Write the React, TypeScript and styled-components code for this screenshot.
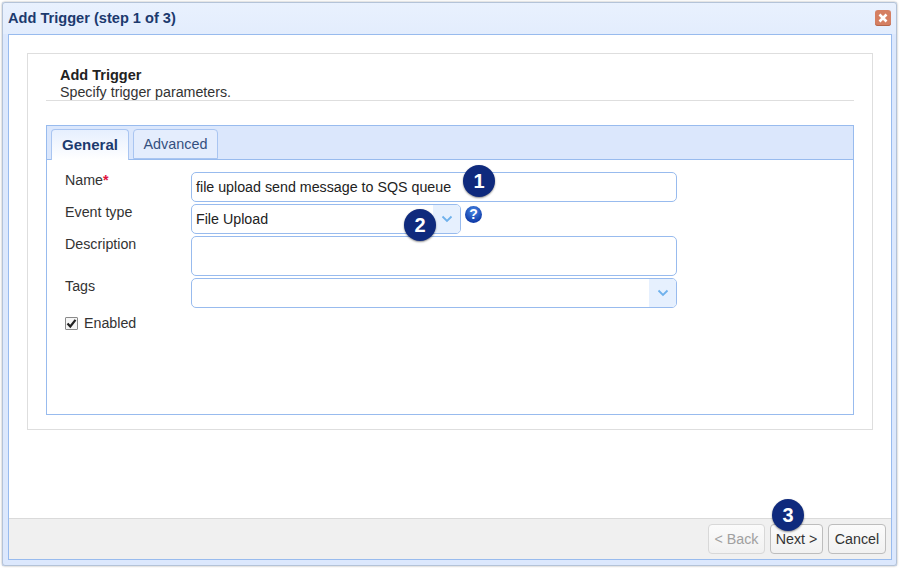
import styled, { createGlobalStyle } from 'styled-components';

const Chevron = () => (
  <svg width="12" height="8" viewBox="0 0 12 8" fill="none">
    <path d="M1.5 1.5 L6 6 L10.5 1.5" stroke="#6fb1ec" strokeWidth="1.8" />
  </svg>
);

const App = () => {
  return (
    <>
      <GlobalStyle />
      <Window>
        <TitleBar>
          <Title>Add Trigger (step 1 of 3)</Title>
          <CloseButton>
            <svg width="12" height="12" viewBox="0 0 12 12" fill="none">
              <path d="M2.5 2.5 L9.5 9.5 M9.5 2.5 L2.5 9.5" stroke="#fff" strokeWidth="2.6" />
            </svg>
          </CloseButton>
        </TitleBar>
        <Panel>
          <Content>
            <Card>
              <Header>
                <Heading>Add Trigger</Heading>
                <Subheading>Specify trigger parameters.</Subheading>
              </Header>
              <TabPanel>
                <TabStrip>
                  <Tab $active>General</Tab>
                  <Tab>Advanced</Tab>
                </TabStrip>
                <Form>
                  <Row>
                    <Label>
                      Name<Required>*</Required>
                    </Label>
                    <Control>file upload send message to SQS queue</Control>
                  </Row>
                  <Row>
                    <Label>Event type</Label>
                    <Control $width={270}>
                      File Upload
                      <Trigger>
                        <Chevron />
                      </Trigger>
                    </Control>
                    <Help>?</Help>
                  </Row>
                  <Row>
                    <Label>Description</Label>
                    <Control $height={40} />
                  </Row>
                  <Row>
                    <Label>Tags</Label>
                    <Control>
                      <Trigger>
                        <Chevron />
                      </Trigger>
                    </Control>
                  </Row>
                  <CheckRow>
                    <CheckBox>
                      <svg width="11" height="11" viewBox="0 0 11 11" fill="none">
                        <path d="M1.5 5.5 L4.3 8.5 L9.5 1.8" stroke="#222" strokeWidth="2.2" />
                      </svg>
                    </CheckBox>
                    Enabled
                  </CheckRow>
                </Form>
              </TabPanel>
            </Card>
          </Content>
          <Footer>
            <Button $width={57} $disabled>&lt; Back</Button>
            <Button $width={53}>Next &gt;</Button>
            <Button $width={58}>Cancel</Button>
          </Footer>
        </Panel>
        <Badge $left={463} $top={165}>1</Badge>
        <Badge $left={404} $top={209}>2</Badge>
        <Badge $left={772} $top={499}>3</Badge>
      </Window>
    </>
  );
};

export default App;

const GlobalStyle = createGlobalStyle`
  * {
    box-sizing: border-box;
  }
  html, body {
    margin: 0;
    background: #fff;
  }
  body {
    font-family: "Liberation Sans", Arial, sans-serif;
    font-size: 14.25px;
    color: #222;
  }
`;

const Window = styled.div`
  position: relative;
  width: 900px;
  height: 569px;
  padding: 2px 3px 3px 2px;
  display: flex;
  flex-direction: column;
  background: #dce8fd;
  background-clip: content-box;

  &::before {
    content: '';
    position: absolute;
    inset: 2px 3px 3px 2px;
    border: 1px solid #b4c3d8;
    border-radius: 3px;
    box-shadow: 0 0 2px rgba(90, 90, 90, 0.6);
    pointer-events: none;
  }
`;

const TitleBar = styled.div`
  height: 32px;
  flex: none;
  padding: 0 6px 0 6px;
  display: flex;
  align-items: center;
  justify-content: space-between;
  background: linear-gradient(#e9f1fe, #e3edfd);
`;

const Title = styled.div`
  font-weight: bold;
  font-size: 14.6px;
  color: #1c3a6e;
`;

const CloseButton = styled.div`
  flex: none;
  width: 16px;
  height: 16px;
  border-radius: 3px;
  background: #d57f62;
  box-shadow: inset 0 -1px 0 #b5664b;
  display: flex;
  align-items: center;
  justify-content: center;
`;

const Panel = styled.div`
  flex: 1;
  min-height: 0;
  margin: 0 5px 6px 6px;
  border: 1px solid #98bbee;
  background: #fff;
  display: flex;
  flex-direction: column;
`;

const Content = styled.div`
  flex: 1;
  padding: 18px 18px 0;
`;

const Card = styled.div`
  height: 377px;
  padding: 0 18px 14px;
  border: 1px solid #dedede;
  display: flex;
  flex-direction: column;
`;

const Header = styled.div`
  flex: none;
  padding: 13px 14px 0;
  height: 47px;
  margin-bottom: 24px;
  line-height: 17px;
  border-bottom: 1px solid #dedede;
`;

const Heading = styled.div`
  font-weight: bold;
  font-size: 14.5px;
  color: #222;
`;

const Subheading = styled.div`
  color: #333;
`;

const TabPanel = styled.div`
  flex: 1;
  border: 1px solid #98bbee;
  display: flex;
  flex-direction: column;
`;

const TabStrip = styled.div`
  flex: none;
  height: 34px;
  padding: 3px 0 0 4px;
  display: flex;
  gap: 4px;
  background: #dbe7fc;
  border-bottom: 1px solid #98bbee;
`;

const Tab = styled.div<{ $active?: boolean }>`
  height: ${(p) => (p.$active ? '31px' : '30px')};
  width: ${(p) => (p.$active ? '78px' : '85px')};
  padding-bottom: ${(p) => (p.$active ? '2px' : '0')};
  display: flex;
  align-items: center;
  justify-content: center;
  border: 1px solid #a9c5f1;
  border-bottom: ${(p) => (p.$active ? '0' : '1px solid #a9c5f1')};
  border-radius: 4px 4px 0 0;
  color: ${(p) => (p.$active ? '#1c3a6e' : '#34507f')};
  font-size: ${(p) => (p.$active ? '15px' : '14.4px')};
  font-weight: ${(p) => (p.$active ? 'bold' : 'normal')};
  background: ${(p) => (p.$active ? 'linear-gradient(#e6effe, #fff)' : '#e4edfd')};
`;

const Form = styled.div`
  padding: 12px 0 0 18px;
  display: flex;
  flex-direction: column;
  gap: 2px;
`;

const Row = styled.div`
  display: flex;
  align-items: flex-start;
`;

const Label = styled.div`
  width: 126px;
  flex: none;
  line-height: 16px;
  color: #333;
`;

const Required = styled.span`
  color: #e0143c;
  font-weight: bold;
`;

const Control = styled.div<{ $width?: number; $height?: number }>`
  width: ${(p) => p.$width ?? 486}px;
  height: ${(p) => p.$height ?? 30}px;
  padding-left: 4px;
  display: flex;
  align-items: center;
  justify-content: space-between;
  border: 1px solid #98bbee;
  border-radius: 5px;
  background: #fff;
  color: #222;
  overflow: hidden;
`;

const Trigger = styled.div`
  width: 27px;
  height: 100%;
  margin-left: auto;
  display: flex;
  align-items: center;
  justify-content: center;
  background: #e6f0fe;
`;

const Help = styled.div`
  width: 17px;
  height: 17px;
  margin: 2px 0 0 4px;
  border-radius: 50%;
  background: radial-gradient(circle at 50% 30%, #4a88e4, #0f3ba8 75%);
  color: #fff;
  font-size: 14px;
  font-weight: bold;
  line-height: 17px;
  text-align: center;
`;

const CheckRow = styled.div`
  margin-top: 5px;
  display: flex;
  align-items: center;
  gap: 6px;
  line-height: 16px;
  color: #333;
`;

const CheckBox = styled.span`
  width: 13px;
  height: 13px;
  border: 1px solid #8a8a8a;
  border-radius: 1px;
  background: #f6f6f6;
  display: flex;
  align-items: center;
  justify-content: center;
`;

const Footer = styled.div`
  flex: none;
  height: 41px;
  padding: 5px 5px 0 0;
  display: flex;
  justify-content: flex-end;
  gap: 5px;
  background: #f0f0f0;
  border-top: 1px solid #dadada;
`;

const Button = styled.div<{ $width: number; $disabled?: boolean }>`
  width: ${(p) => p.$width}px;
  height: 30px;
  display: flex;
  align-items: center;
  justify-content: center;
  border: 1px solid ${(p) => (p.$disabled ? '#d8d8d8' : '#bdbdbd')};
  border-radius: 4px;
  background: linear-gradient(#fbfbfb, #f1f1f1);
  color: ${(p) => (p.$disabled ? '#a0a0a0' : '#333')};
`;

const Badge = styled.div<{ $left: number; $top: number }>`
  position: absolute;
  left: ${(p) => p.$left}px;
  top: ${(p) => p.$top}px;
  width: 32px;
  height: 32px;
  border-radius: 50%;
  background: #0f2a7d;
  box-shadow: 0 1px 2px rgba(0, 0, 0, 0.45);
  color: #fff;
  font-size: 20px;
  font-weight: bold;
  line-height: 32px;
  text-align: center;
`;
